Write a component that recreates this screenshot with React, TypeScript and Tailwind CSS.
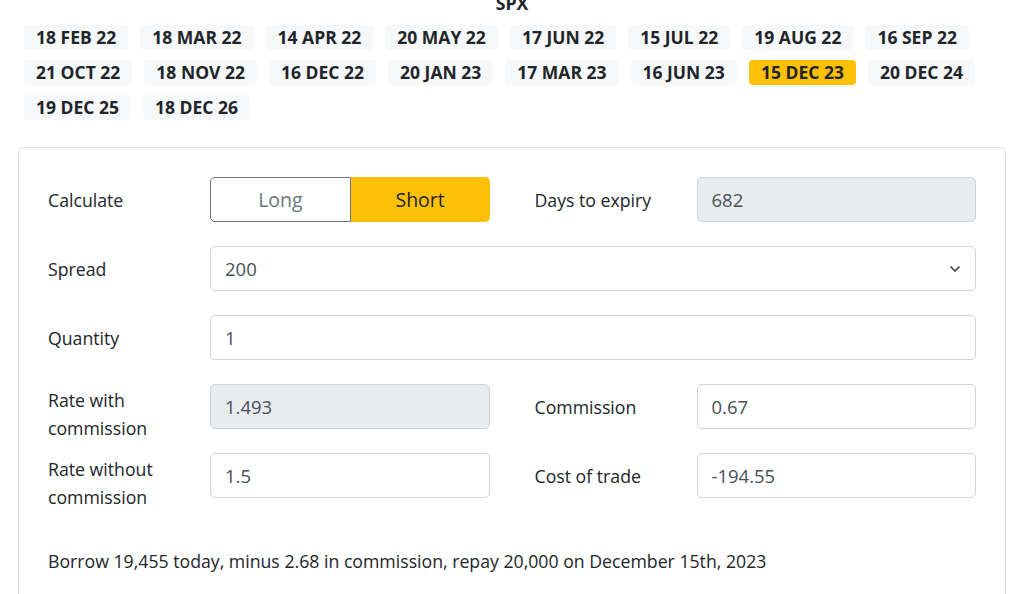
import { ChevronDown } from "lucide-react";

const expiries = [
  "18 FEB 22",
  "18 MAR 22",
  "14 APR 22",
  "20 MAY 22",
  "17 JUN 22",
  "15 JUL 22",
  "19 AUG 22",
  "16 SEP 22",
  "21 OCT 22",
  "18 NOV 22",
  "16 DEC 22",
  "20 JAN 23",
  "17 MAR 23",
  "16 JUN 23",
  "15 DEC 23",
  "20 DEC 24",
  "19 DEC 25",
  "18 DEC 26",
];

const selected = "15 DEC 23";

function Field({ value, disabled }: { value: string; disabled?: boolean }) {
  return (
    <div
      className={`h-[45px] flex-1 flex items-center px-[14px] rounded-[5px] border border-[#ced4da] text-[#495057] text-[18.5px] ${
        disabled ? "bg-[#e9ecef]" : "bg-white"
      }`}
    >
      {value}
    </div>
  );
}

function Label({ children, top }: { children: React.ReactNode; top?: boolean }) {
  return (
    <div className={`w-[162px] shrink-0 leading-[28px] text-[#212529] ${top ? "self-start pt-[2px]" : ""}`}>
      {children}
    </div>
  );
}

export default function App() {
  return (
    <div className="min-h-screen bg-white overflow-hidden font-['Open_Sans',sans-serif] text-[17.7px] text-[#212529]">
      {/* Title */}
      <h1 className="text-center font-bold text-[17.7px] leading-[24px] -mt-[9px]">SPX</h1>

      {/* Expiry badges */}
      <div className="flex flex-wrap gap-x-3 gap-y-[10px] px-6 mt-[10px]">
        {expiries.map((d) => (
          <span
            key={d}
            className={`h-[25px] px-3 rounded-[4px] font-bold text-[17.5px] leading-[25px] ${
              d === selected ? "bg-[#ffc107] text-[#212529]" : "bg-[#f6f8f9] text-[#212529]"
            }`}
          >
            {d}
          </span>
        ))}
      </div>

      {/* Calculator card */}
      <div className="mx-[18px] mt-[27px] border border-[#dee2e6] rounded-[6px] px-[29px] pt-[29px] pb-10">
        <div className="flex flex-col gap-6">
          <div className="flex gap-[45px] h-[45px]">
            <div className="flex flex-1 items-center">
              <Label>Calculate</Label>
              <div className="flex flex-1 h-[45px] text-[19.5px]">
                <div className="flex-1 flex items-center justify-center border border-[#6c757d] rounded-l-[5px] text-[#6c757d] bg-white">
                  Long
                </div>
                <div className="flex-1 flex items-center justify-center bg-[#ffc107] rounded-r-[5px] text-[#212529]">
                  Short
                </div>
              </div>
            </div>
            <div className="flex flex-1 items-center">
              <Label>Days to expiry</Label>
              <Field value="682" disabled />
            </div>
          </div>

          <div className="flex items-center h-[45px]">
            <Label>Spread</Label>
            <div className="h-[45px] flex-1 flex items-center justify-between pl-[14px] pr-[12px] rounded-[5px] border border-[#ced4da] text-[#495057] text-[18.5px] bg-white">
              <span>200</span>
              <ChevronDown className="w-4 h-4 text-[#343a40]" strokeWidth={2.5} />
            </div>
          </div>

          <div className="flex items-center h-[45px]">
            <Label>Quantity</Label>
            <Field value="1" />
          </div>

          <div className="flex gap-[45px] h-[45px]">
            <div className="flex flex-1 items-center">
              <Label top>Rate with commission</Label>
              <Field value="1.493" disabled />
            </div>
            <div className="flex flex-1 items-center">
              <Label>Commission</Label>
              <Field value="0.67" />
            </div>
          </div>

          <div className="flex gap-[45px] h-[45px]">
            <div className="flex flex-1 items-center">
              <Label top>Rate without commission</Label>
              <Field value="1.5" />
            </div>
            <div className="flex flex-1 items-center">
              <Label>Cost of trade</Label>
              <Field value="-194.55" />
            </div>
          </div>
        </div>

        <p className="mt-[49px] leading-[28px]">
          Borrow 19,455 today, minus 2.68 in commission, repay 20,000 on December 15th, 2023
        </p>
      </div>
    </div>
  );
}
